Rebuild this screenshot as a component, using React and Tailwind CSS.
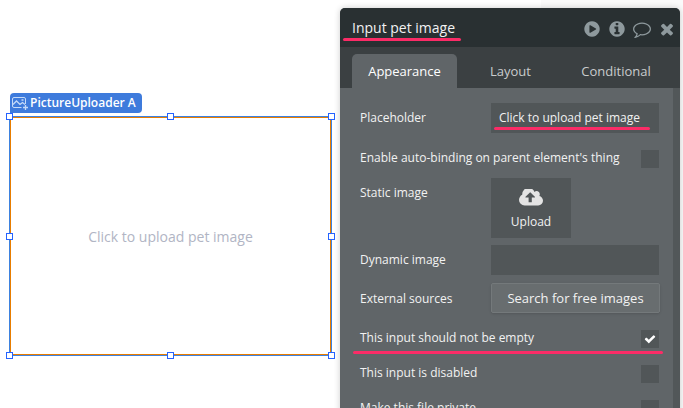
import React from "react";

const iconPaths = {
  play: "M896 128q209 0 385.500 103t279.500 279.500 103 385.500-103 385.500-279.500 279.500-385.500 103-385.500-103-279.500-279.500-103-385.500 103-385.500 279.500-279.500 385.500-103zm384 823q32-18 32-55t-32-55l-544-320q-31-19-64-1-32 19-32 56v640q0 37 32 56 16 8 32 8 17 0 32-9z",
  info: "M1152 1376v-160q0-14-9-23t-23-9h-96v-512q0-14-9-23t-23-9h-320q-14 0-23 9t-9 23v160q0 14 9 23t23 9h96v320h-96q-14 0-23 9t-9 23v160q0 14 9 23t23 9h448q14 0 23-9t9-23zm-128-896v-160q0-14-9-23t-23-9h-192q-14 0-23 9t-9 23v160q0 14 9 23t23 9h192q14 0 23-9t9-23zm640 416q0 209-103 385.500t-279.500 279.500-385.500 103-385.500-103-279.500-279.500-103-385.500 103-385.500 279.500-279.500 385.500-103 385.500 103 279.500 279.500 103 385.500z",
  comment: "M896 384q-204 0-381.500 69.500t-282 187.500-104.500 255q0 112 71.500 213.500t201.500 175.500l87 50-27 96q-24 91-70 172 152-63 275-171l43-38 57 6q69 8 130 8 204 0 381.500-69.500t282-187.500 104.500-255-104.500-255-282-187.500-381.500-69.500zm896 512q0 174-120 321.500t-326 233-450 85.500q-70 0-145-8-198 175-460 242-49 14-114 22h-5q-15 0-27-10.500t-16-27.500v-1q-3-4-.5-12t2-10 4.500-9.500l6-9 7-8.500 8-9q7-8 31-34.500t34.500-38 31-39.500 32.500-51 27-59 26-76q-157-89-247.500-220t-90.500-281q0-174 120-321.500t326-233 450-85.500 450 85.500 326 233 120 321.500z",
  close: "M1490 1322q0 40-28 68l-136 136q-28 28-68 28t-68-28l-294-294-294 294q-28 28-68 28t-68-28l-136-136q-28-28-28-68t28-68l294-294-294-294q-28-28-28-68t28-68l136-136q28-28 68-28t68 28l294 294 294-294q28-28 68-28t68 28l136 136q28 28 28 68t-28 68l-294 294 294 294q28 28 28 68z",
  check: "M1671 566q0 40-28 68l-724 724-136 136q-28 28-68 28t-68-28l-136-136-362-362q-28-28-28-68t28-68l136-136q28-28 68-28t68 28l294 295 656-657q28-28 68-28t68 28l136 136q28 28 28 68z",
  upload: "M1280 864q0-14-9-23l-352-352q-9-9-23-9t-23 9l-351 351q-10 12-10 24 0 14 9 23t23 9h224v352q0 13 9.500 22.500t22.500 9.500h192q13 0 22.500-9.500t9.500-22.500v-352h224q13 0 22.500-9.500t9.500-22.500zm640 288q0 159-112.500 271.500t-271.500 112.500h-1088q-185 0-316.500-131.500t-131.500-316.500q0-130 70-240t188-165q-2-30-2-43 0-212 150-362t362-150q156 0 285.500 87t188.500 231q71-62 166-62 106 0 181 75t75 181q0 76-41 138 130 31 213.500 135.500t83.500 238.500z",
};

function Icon({ name, className, viewBox = "0 0 1792 1792" }) {
  return (
    <svg className={className} viewBox={viewBox} fill="currentColor">
      <path d={iconPaths[name]} />
    </svg>
  );
}

function Underline({ className }) {
  return <span className={`absolute h-[3px] rounded-full bg-[#fb2c67] ${className}`} />;
}

function Handle({ className }) {
  return <span className={`absolute size-[7px] border border-[#2563ff] bg-white ${className}`} />;
}

function Checkbox({ checked }) {
  return (
    <span className="flex size-[18px] items-center justify-center bg-[#515658] text-white">
      {checked && <Icon name="check" className="size-3" />}
    </span>
  );
}

function Row({ label, className = "", labelClass = "", children }) {
  return (
    <div className={`flex items-center justify-between ${className}`}>
      <span className={`whitespace-nowrap ${labelClass}`}>{label}</span>
      {children}
    </div>
  );
}

function CheckRow({ label, checked }) {
  return (
    <Row label={label} className="mt-[17px] h-[18px]" labelClass="pb-[2px]">
      <Checkbox checked={checked} />
    </Row>
  );
}

function UploaderElement() {
  return (
    <div className="mt-[93px] ml-[9px] w-[323px]">
      <div className="ml-px flex h-5 w-[132px] items-center rounded-t-sm rounded-br-sm bg-[#3e7bdc] pl-[2px] text-[12px] font-semibold text-white">
        <svg className="mt-px h-[15px] w-4 text-[#c5daf8]" viewBox="0 0 16 15" fill="none" stroke="currentColor">
          <path d="M9.500 11.500H2Q.5 11.500.5 10V3Q.5 1.500 2 1.500H12Q13.500 1.500 13.500 3V8" />
          <path d="M1 8.500L4.500 5L8 8.500L10.500 6.500L13 8.500" strokeWidth="1.300" />
          <path d="M9.500 4H11.500M13.500 9V14M11 11.500H16" strokeWidth="1.300" />
        </svg>
        <span className="ml-[2px] whitespace-nowrap">PictureUploader A</span>
      </div>
      <div className="relative mt-[3px] h-60 border border-[#3e82df]">
        <div className="flex h-full items-center justify-center border border-[#e87d00] text-[14px] text-[#b1b5c4]">
          Click to upload pet image
        </div>
        <Handle className="-top-1 -left-1" />
        <Handle className="-top-1 left-[157px]" />
        <Handle className="-top-1 -right-1" />
        <Handle className="top-[116px] -left-1" />
        <Handle className="top-[116px] -right-1" />
        <Handle className="-bottom-1 -left-1" />
        <Handle className="-bottom-1 left-[157px]" />
        <Handle className="-right-1 -bottom-1" />
      </div>
    </div>
  );
}

function PropertyPanel() {
  return (
    <div className="relative mt-2 ml-2 flex h-[410px] w-[340px] shrink-0 flex-col overflow-hidden rounded-t-[5px] bg-[#606568] text-[12px] text-[#f2f2f2] shadow-[0_0_6px_rgba(0,0,0,0.2)]">
      <header className="flex h-[39px] shrink-0 items-center justify-between bg-[#293032] pr-1 pl-3">
        <h1 className="text-[14px]">Input pet image</h1>
        <div className="mt-[2px] flex items-center text-[#8e999d]">
          <Icon name="play" className="size-[18px]" />
          <Icon name="info" className="ml-[7px] size-[18px]" />
          <Icon name="comment" className="ml-[7px] size-[18px]" />
          <Icon name="close" className="ml-[7px] size-[18px]" />
        </div>
      </header>
      <nav className="flex h-[41px] shrink-0 items-end bg-[#3b4042] pl-3 text-[13px] text-[#c9cccd]">
        <span className="flex h-[34px] w-[105px] items-center justify-center rounded-t-[5px] bg-[#606568] pt-[2px] text-white">Appearance</span>
        <span className="flex h-[34px] w-[107px] items-center justify-center pt-[2px]">Layout</span>
        <span className="flex h-[34px] w-[104px] items-center justify-center pt-[2px]">Conditional</span>
      </nav>
      <div className="flex min-h-0 flex-1">
        <div className="flex flex-1 flex-col pt-[15px] pr-[14px] pl-5">
          <Row label="Placeholder">
            <span className="flex h-[30px] w-[168px] items-center bg-[#515658] pl-2">Click to upload pet image</span>
          </Row>
          <CheckRow label="Enable auto-binding on parent element's thing" />
          <div className="mt-[10px] flex justify-between">
            <span className="mt-[6px]">Static image</span>
            <span className="mr-[88px] flex h-[60px] w-20 flex-col items-center bg-[#515658] pt-[11px]">
              <Icon name="upload" viewBox="0 256 1920 1280" className="h-[17px] w-6 text-[#e4e4e4]" />
              <span className="mt-[7px]">Upload</span>
            </span>
          </div>
          <Row label="Dynamic image" className="mt-[7px]">
            <span className="h-[30px] w-[168px] bg-[#515658]" />
          </Row>
          <Row label="External sources" className="mt-2" labelClass="pt-[2px]">
            <span className="-mr-px flex h-[30px] w-[169px] items-center justify-center rounded-[2px] border border-[#74797b] bg-[#686d6f] pt-[2px] text-[13px] shadow-sm">
              Search for free images
            </span>
          </Row>
          <CheckRow label="This input should not be empty" checked />
          <CheckRow label="This input is disabled" />
          <CheckRow label="Make this file private" />
        </div>
        <div className="w-[7px] bg-[#525759]" />
      </div>
      <Underline className="top-[30px] left-[3px] w-[118px]" />
      <Underline className="top-[119px] left-[154px] w-[156px]" />
      <Underline className="top-[343px] left-[13px] w-[310px]" />
    </div>
  );
}

export default function App() {
  return (
    <main className="flex h-[408px] w-[683px] overflow-hidden bg-[linear-gradient(to_right,white_541px,#fafafa_541px)] font-['Open_Sans','Noto_Sans',sans-serif]">
      <UploaderElement />
      <PropertyPanel />
    </main>
  );
}
